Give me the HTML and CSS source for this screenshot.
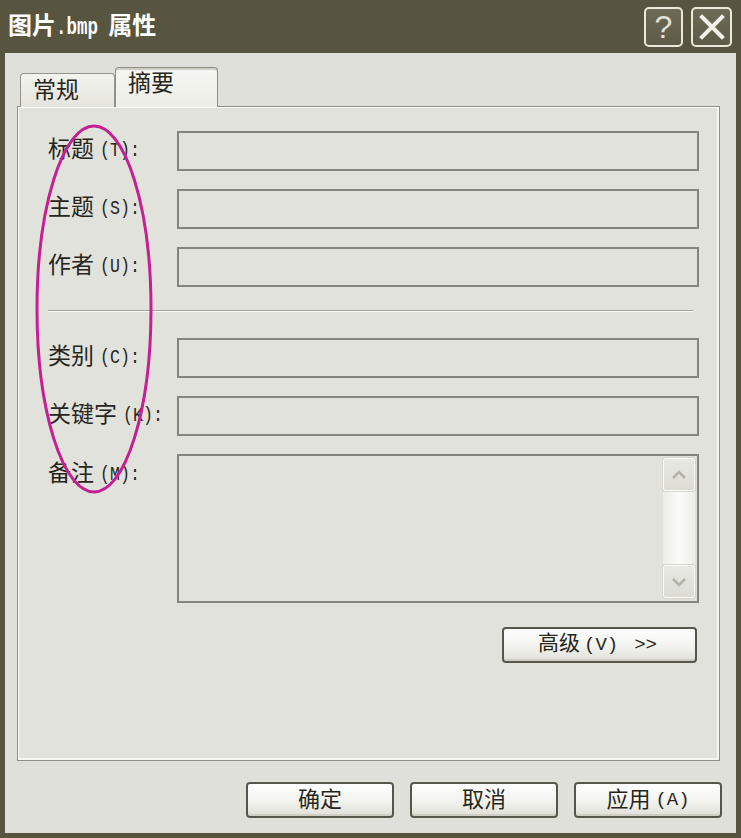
FILE: index.html
```html
<!DOCTYPE html>
<html lang="zh-CN">
<head>
<meta charset="utf-8">
<title>图片.bmp 属性</title>
<link rel="stylesheet" href="styles.css">
</head>
<body>
<div class="window">
  <div class="titlebar">
    <div class="title"><span class="cjk">图片</span><span class="latin">.bmp</span><span class="cjk">属性</span></div>
    <div class="controls">
      <div class="ctl help">?</div>
      <div class="ctl close">
        <svg width="26" height="26" viewBox="0 0 26 26"><path d="M3 3 L23 23 M23 3 L3 23" stroke="#f2f2ea" stroke-width="4" stroke-linecap="square"/></svg>
      </div>
    </div>
  </div>
  <div class="client">
    <div class="tabs">
      <div class="tab">常规</div>
      <div class="tab active">摘要</div>
    </div>
    <div class="panel">
      <div class="form">
        <div class="label"><span class="zh">标题</span><span class="mn">(T):</span></div>
        <div class="field"></div>
        <div class="label"><span class="zh">主题</span><span class="mn">(S):</span></div>
        <div class="field"></div>
        <div class="label"><span class="zh">作者</span><span class="mn">(U):</span></div>
        <div class="field"></div>
        <div class="sep"></div>
        <div class="label"><span class="zh">类别</span><span class="mn">(C):</span></div>
        <div class="field"></div>
        <div class="label"><span class="zh">关键字</span><span class="mn">(K):</span></div>
        <div class="field"></div>
        <div class="label top"><span class="zh">备注</span><span class="mn">(M):</span></div>
        <div class="memo">
          <div class="scroll">
            <div class="sbtn">
              <svg width="16" height="10" viewBox="0 0 16 10"><path d="M2 8 L8 2 L14 8" fill="none" stroke="#b3b3aa" stroke-width="2.5"/></svg>
            </div>
            <div class="track"></div>
            <div class="sbtn">
              <svg width="16" height="10" viewBox="0 0 16 10"><path d="M2 2 L8 8 L14 2" fill="none" stroke="#b3b3aa" stroke-width="2.5"/></svg>
            </div>
          </div>
        </div>
        <div class="adv-row">
          <div class="btn adv"><span class="zh">高级</span><span class="bm">(V)</span><span class="bm">&gt;&gt;</span></div>
        </div>
      </div>
    </div>
    <div class="actions">
      <div class="btn"><span class="zh">确定</span></div>
      <div class="btn"><span class="zh">取消</span></div>
      <div class="btn"><span class="zh">应用</span><span class="bm">(A)</span></div>
    </div>
  </div>
  <svg class="mark" width="741" height="838" viewBox="0 0 741 838">
    <ellipse cx="94" cy="309" rx="57" ry="183" fill="none" stroke="#c51f91" stroke-width="3"/>
  </svg>
</div>
</body>
</html>
```
FILE: styles.css
```css
html, body {
  margin: 0;
  padding: 0;
  background: #57553f;
}

.window {
  position: relative;
  width: 741px;
  height: 838px;
  background: #57553f;
  display: flex;
  flex-direction: column;
  font-family: "Noto Sans CJK SC", "Noto Sans", sans-serif;
  color: #26261c;
  overflow: hidden;
}

.titlebar {
  height: 53px;
  flex: 0 0 53px;
  display: flex;
  align-items: center;
  justify-content: space-between;
  padding: 0 9px 0 8px;
  box-sizing: border-box;
}

.title {
  color: #ffffff;
  font-weight: 700;
  font-size: 24px;
  line-height: 1;
  padding-bottom: 2px;
  display: flex;
  align-items: baseline;
}

.title .latin {
  display: inline-block;
  font-family: "Liberation Mono", monospace;
  font-size: 23px;
  font-weight: 700;
  transform: scaleX(0.76);
  transform-origin: left center;
  margin: 0 -3px 0 0;
}

.controls {
  display: flex;
  gap: 8px;
  align-self: flex-start;
  margin-top: 7px;
}

.ctl {
  width: 39px;
  height: 40px;
  box-sizing: border-box;
  border: 2px solid #e9e9dc;
  border-radius: 5px;
  background: linear-gradient(#6d6b56, #5d5b47);
  display: flex;
  align-items: center;
  justify-content: center;
  color: #ececE2;
}

.ctl.close {
  width: 41px;
}

.ctl.help {
  font-family: "Liberation Sans", sans-serif;
  font-size: 32px;
  line-height: 1;
  color: #e2e2d8;
}

.client {
  flex: 1;
  margin: 0 5px 5px 5px;
  background: #e0e0da;
  display: flex;
  flex-direction: column;
  padding: 14px 14px 15px 12px;
}

.tabs {
  display: flex;
  align-items: flex-end;
  padding-left: 3px;
  margin-bottom: -1px;
  position: relative;
  z-index: 1;
}

.tab {
  width: 95px;
  height: 34px;
  box-sizing: border-box;
  border: 1px solid #94948c;
  border-bottom: none;
  border-radius: 4px 4px 0 0;
  background: linear-gradient(#f4f4ef, #e4e4dd);
  font-size: 23px;
  line-height: 1;
  padding: 3px 0 0 12px;
  color: #26261c;
}

.tab.active {
  width: 103px;
  height: 40px;
  background: linear-gradient(#f6f6f2, #eeeee8);
  padding: 2px 0 0 12px;
  border-color: #8e8e86;
  box-shadow: inset 0 2px 0 #cfcfc6;
}

.panel {
  flex: 1;
  margin-right: 2px;
  border: 1px solid #8f8f88;
  background: #e2e2dd;
  box-shadow: inset 1px 1px 0 #fbfbf6, inset -2px -2px 0 #f6f6f0;
  padding: 24px 20px 0 30px;
}

.form {
  display: grid;
  grid-template-columns: 129px 1fr;
  grid-auto-rows: auto;
  row-gap: 18px;
}

.label {
  font-size: 23px;
  line-height: 1;
  align-self: center;
  white-space: nowrap;
  color: #26261c;
  display: flex;
  align-items: center;
  gap: 6px;
  padding-bottom: 6px;
}

.label .zh {
  padding-bottom: 2px;
}

.label.top {
  align-self: start;
  padding-top: 5px;
}

.mn {
  display: inline-block;
  font-family: "Liberation Mono", monospace;
  font-size: 20px;
  line-height: 1;
  transform: scaleX(0.83);
  transform-origin: left center;
  margin-right: -8px;
  padding-top: 6px;
}

.bm {
  font-family: "Liberation Mono", monospace;
  font-size: 19px;
  line-height: 1;
}

.field {
  height: 40px;
  box-sizing: border-box;
  border: 2px solid #85857e;
  background: #e2e2dd;
}

.sep {
  grid-column: 1 / 3;
  height: 1px;
  background: #a3a39b;
  border-bottom: 1px solid #fbfbf6;
  margin: 5px 6px 8px 0;
}

.memo {
  height: 149px;
  box-sizing: border-box;
  border: 2px solid #85857e;
  background: #e2e2dd;
  display: flex;
  justify-content: flex-end;
  padding: 2px 2px 3px 0;
}

.scroll {
  width: 32px;
  display: flex;
  flex-direction: column;
  background: linear-gradient(90deg, #ececE7, #fbfbf8 50%, #eeeee9);
}

.track {
  flex: 1;
}

.sbtn {
  height: 33px;
  box-sizing: border-box;
  border: 1px solid #fbfbf7;
  border-radius: 3px;
  background: linear-gradient(#e9e9e4, #dcdcd5);
  box-shadow: 0 0 0 1px #d4d4cc;
  display: flex;
  align-items: center;
  justify-content: center;
}

.adv-row {
  grid-column: 1 / 3;
  display: flex;
  justify-content: flex-end;
  padding-right: 2px;
  margin-top: 6px;
}

.btn {
  height: 36px;
  width: 148px;
  box-sizing: border-box;
  border: 2px solid #56564a;
  border-radius: 4px;
  background: linear-gradient(#ffffff, #f1f1ec 60%, #dedfd7);
  box-shadow: inset 0 -2px 0 #cfcfc6;
  display: flex;
  align-items: center;
  justify-content: center;
  gap: 5px;
  font-size: 22px;
  line-height: 1;
  color: #26261c;
  white-space: nowrap;
}

.btn .zh {
  padding-bottom: 7px;
}

.btn.adv {
  width: 195px;
  font-size: 21px;
  gap: 4px;
  padding-right: 4px;
}

.btn.adv .bm + .bm {
  margin-left: 12px;
}

.actions {
  display: flex;
  justify-content: flex-end;
  gap: 16px;
  margin-top: 21px;
}

.mark {
  position: absolute;
  left: 0;
  top: 0;
  pointer-events: none;
}
```
